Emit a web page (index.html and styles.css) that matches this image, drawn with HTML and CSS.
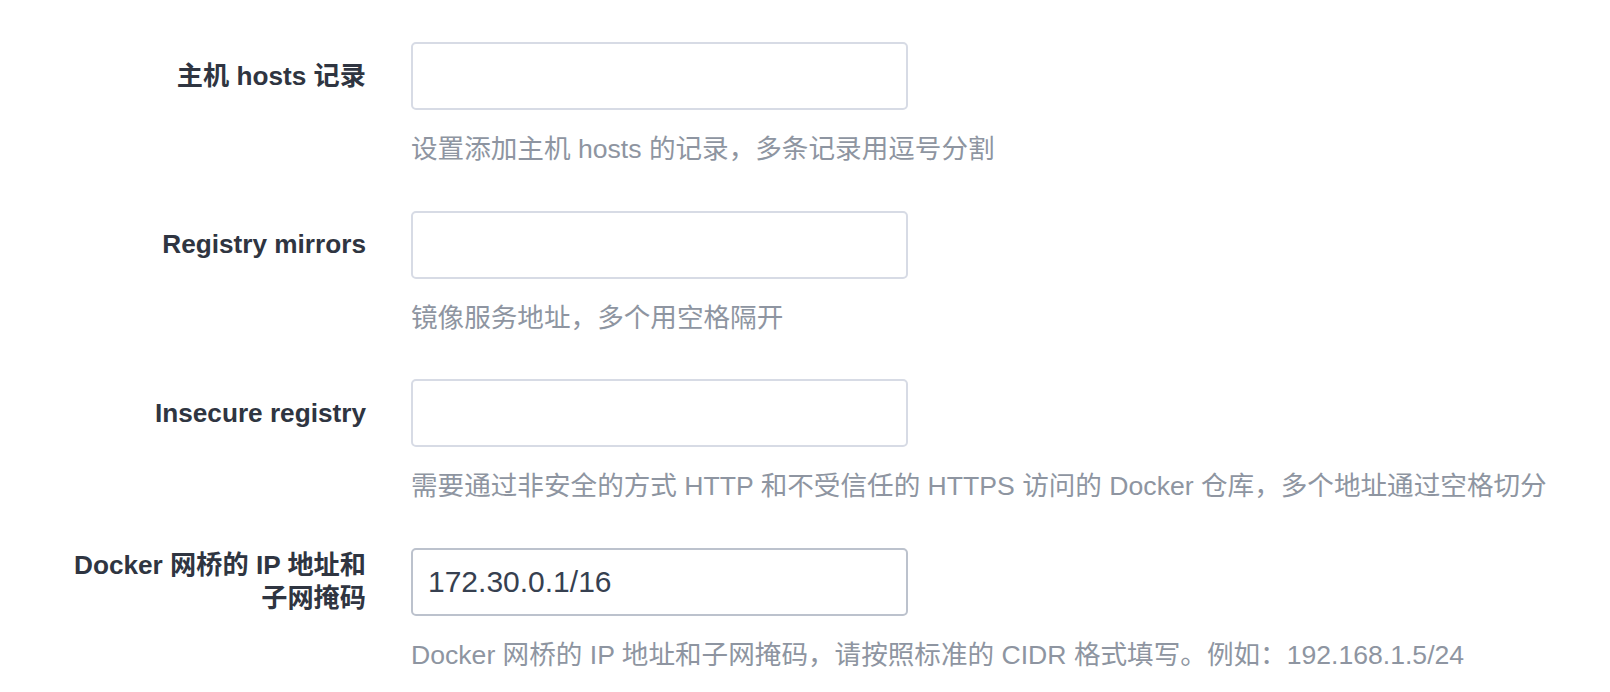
FILE: index.html
```html
<!DOCTYPE html>
<html lang="zh-CN">
<head>
<meta charset="utf-8">
<title>Docker 设置</title>
<link rel="stylesheet" href="styles.css">
</head>
<body>
<form class="form">
  <div class="form-item">
    <label class="label">主机 hosts 记录</label>
    <input class="input" type="text" value="">
    <div class="help">设置添加主机 hosts 的记录，多条记录用逗号分割</div>
  </div>
  <div class="form-item">
    <label class="label">Registry mirrors</label>
    <input class="input" type="text" value="">
    <div class="help">镜像服务地址，多个用空格隔开</div>
  </div>
  <div class="form-item">
    <label class="label">Insecure registry</label>
    <input class="input" type="text" value="">
    <div class="help">需要通过非安全的方式 HTTP 和不受信任的 HTTPS 访问的 Docker 仓库，多个地址通过空格切分</div>
  </div>
  <div class="form-item">
    <label class="label">Docker 网桥的 IP 地址和<br>子网掩码</label>
    <input class="input input-filled" type="text" value="172.30.0.1/16">
    <div class="help">Docker 网桥的 IP 地址和子网掩码，请按照标准的 CIDR 格式填写。例如：192.168.1.5/24</div>
  </div>
</form>
</body>
</html>
```
FILE: styles.css
```css
html, body {
  margin: 0;
  padding: 0;
  background: #ffffff;
}
body {
  font-family: "Liberation Sans", "Noto Sans CJK SC", sans-serif;
  color: #2f3541;
}
.form {
  padding-top: 42px;
}
.form-item {
  display: grid;
  grid-template-columns: 411px 497px;
  margin-bottom: 43.7px;
}
.label {
  align-self: center;
  text-align: right;
  padding-right: 45px;
  font-size: 26.2px;
  line-height: 33px;
  font-weight: 700;
  color: #2f3541;
}
.input {
  box-sizing: border-box;
  width: 497px;
  height: 68px;
  margin: 0;
  padding: 0 15px;
  border: 2px solid #d7dbe5;
  border-radius: 5px;
  background: #fff;
  font-family: "Liberation Sans", "Noto Sans CJK SC", sans-serif;
  font-size: 30px;
  color: #364050;
  outline: none;
}
.input-filled {
  border-color: #bcc2cd;
}
.help {
  grid-column: 2;
  white-space: nowrap;
  margin-top: 21px;
  font-size: 26.6px;
  line-height: 36px;
  color: #8e95a1;
}
```
